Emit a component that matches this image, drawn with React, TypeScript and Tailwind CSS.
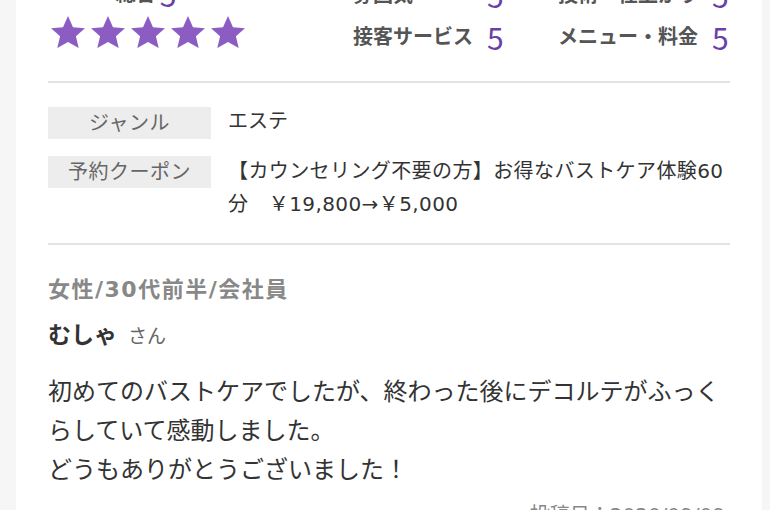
const font = { fontFamily: '"DejaVu Sans", "Noto Sans CJK JP", sans-serif' };
const numFont = { fontFamily: '"Noto Sans CJK JP", "Noto Sans", sans-serif' };

const scores = [
  { label: '雰囲気', value: 5 },
  { label: '技術・仕上がり', value: 5 },
  { label: '接客サービス', value: 5 },
  { label: 'メニュー・料金', value: 5 },
];

function Star() {
  return (
    <svg width="40" height="38" viewBox="0 0 24 24" className="shrink-0">
      <path
        d="M12 1.3l3.15 7 7.55.7-5.7 5.05 1.75 7.5L12 17.7l-6.75 3.85 1.75-7.5-5.7-5.05 7.55-.7z"
        fill="#8b5dc3"
      />
    </svg>
  );
}

export default function App() {
  return (
    <div className="h-[510px] w-[770px] overflow-hidden bg-[#f6f6f6]" style={font}>
      <div className="ml-[16px] w-[746px] bg-white px-[32px] -mt-[26px] pb-10">
        {/* scores */}
        <div className="flex pb-[23px] border-b-2 border-[#e3e3e3]">
          <div className="w-[305px] flex flex-col">
            <div className="h-[40px] w-[196px] flex items-center justify-center gap-1">
              <span className="text-[20px] font-semibold text-[#555]">総合</span>
              <span className="text-[30px] leading-none text-[#6b3fa8]" style={numFont}>5</span>
            </div>
            <div className="flex items-center">
              {[0, 1, 2, 3, 4].map((i) => (
                <Star key={i} />
              ))}
            </div>
          </div>
          <div className="grid grid-cols-[134px_71px_154px_auto] auto-rows-[42px] items-center">
            {scores.map((s) => (
              <>
                <span key={s.label} className="text-[20px] font-semibold text-[#555] whitespace-nowrap">
                  {s.label}
                </span>
                <span className="text-[30px] leading-none text-[#6b3fa8]" style={numFont}>
                  {s.value}
                </span>
              </>
            ))}
          </div>
        </div>

        {/* info */}
        <div className="pt-[24px] pb-[22px] border-b-2 border-[#e3e3e3] flex flex-col gap-[17px]">
          <div className="flex items-start gap-[17px]">
            <div className="w-[163px] h-[32px] shrink-0 bg-[#ededed] text-[#666] text-[20px] tracking-[0.5px] flex items-center justify-center">
              ジャンル
            </div>
            <div className="text-[20px] leading-[33px] text-[#333] -mt-[2px]">エステ</div>
          </div>
          <div className="flex items-start gap-[17px]">
            <div className="w-[163px] h-[32px] shrink-0 bg-[#ededed] text-[#666] text-[20px] tracking-[0.5px] flex items-center justify-center">
              予約クーポン
            </div>
            <div className="text-[20px] leading-[33px] tracking-[0.4px] text-[#333] -mt-[1px] -mr-[14px]">
              【カウンセリング不要の方】お得なバストケア体験60
              <br />
              分　￥19,800→￥5,000
            </div>
          </div>
        </div>

        {/* review */}
        <div className="pt-[30px]">
          <div className="text-[22px] leading-[30px] tracking-[1.5px] font-bold text-[#888]">女性/30代前半/会社員</div>
          <div className="mt-[15px] leading-[30px] flex items-baseline gap-[11px]">
            <span className="text-[23px] font-bold text-[#333]">むしゃ</span>
            <span className="text-[19px] text-[#666]">さん</span>
          </div>
          <p className="mt-[22px] text-[24px] leading-[39px] text-[#333]">
            初めてのバストケアでしたが、終わった後にデコルテがふっくらしていて感動しました。
            <br />
            どうもありがとうございました！
          </p>
          <div className="mt-[10px] text-right pr-[5px] text-[20px] leading-[30px] text-[#888]">
            投稿日：2020/09/09
          </div>
        </div>
      </div>
    </div>
  );
}
